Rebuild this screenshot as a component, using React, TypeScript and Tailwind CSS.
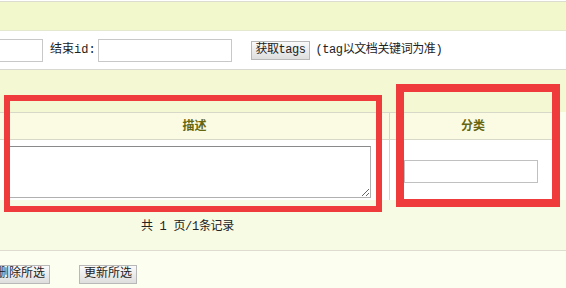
import React from "react";

const font = { fontFamily: '"Liberation Mono", "Noto Sans CJK SC", monospace' };

const Btn = ({ children, className = "" }: { children: React.ReactNode; className?: string }) => (
    <button
        className={
            "h-[19px] px-[4px] whitespace-nowrap text-[12px] leading-[17px] text-[#222] border border-[#b8b8b8] bg-gradient-to-b from-[#fafafa] to-[#dedede] " +
            className
        }
    >
        {children}
    </button>
);

const App: React.FC = () => {
    return (
        <div className="relative w-[566px] h-[288px] overflow-hidden bg-[#fcfef0] text-[12px] text-[#222]" style={font}>
            {/* top strip */}
            <div className="h-[2px] bg-white border-b border-[#dcdcd0]"/>
            <div className="h-[29px] bg-[#f2f8cc] border-b border-[#e4e8cc]"/>

            {/* tags form row */}
            <div className="h-[39px] bg-white flex items-center border-b border-[#d8d8d0]">
                <input className="ml-[-60px] w-[103px] h-[23px] border border-[#c8c8c8] bg-white"/>
                <span className="ml-[7px]">结束id:</span>
                <input className="ml-[2px] w-[134px] h-[23px] border border-[#c8c8c8] bg-white"/>
                <Btn className="ml-[19px] px-[2px] tracking-[-0.5px]">获取tags</Btn>
                <span className="ml-[5px] tracking-[-0.4px]">(tag以文档关键词为准)</span>
            </div>

            {/* table */}
            <div className="h-[42px] bg-[#f4f9d3]"/>
            <div className="flex w-[557px] border-r border-[#d8d8c8]">
                <div className="w-[390px] border-r border-[#d8d8c8]">
                    <div className="h-[28px] bg-[#fafbe2] border-y border-[#d8d8c8] flex items-center justify-center pt-[1px] font-bold text-[#666611]">
                        描述
                    </div>
                    <div className="h-[60px] bg-white pl-[9px] pt-[6px]">
                        <textarea className="block w-[362px] h-[52px] border border-[#b0b0b0] border-t-[#8a8a8a] bg-white resize-y"/>
                    </div>
                </div>
                <div className="flex-1">
                    <div className="h-[28px] bg-[#fafbe2] border-y border-[#d8d8c8] flex items-center justify-center pt-[1px] font-bold text-[#666611]">
                        分类
                    </div>
                    <div className="h-[60px] bg-white pl-[14px] pt-[20px]">
                        <input className="block w-[134px] h-[23px] border border-[#c0c0c0] bg-white"/>
                    </div>
                </div>
            </div>
            <div className="h-[51px] bg-[#f8fbe4] border-b border-[#dedcd0] flex items-center">
                <div className="w-[375px] text-center pt-[3px] tracking-[-0.3px]">共 1 页/1条记录</div>
            </div>

            {/* actions */}
            <div className="flex items-center pt-[14px]">
                <Btn className="ml-[-8px]">删除所选</Btn>
                <Btn className="ml-[29px]">更新所选</Btn>
            </div>

            {/* annotation boxes */}
            <div className="absolute left-[4px] top-[95px] w-[378px] h-[117px] border-[6px] border-[#ef3b3b]"/>
            <div className="absolute left-[396px] top-[84px] w-[164px] h-[123px] border-[8px] border-[#ef3b3b]"/>
        </div>
    );
};

export default App;
